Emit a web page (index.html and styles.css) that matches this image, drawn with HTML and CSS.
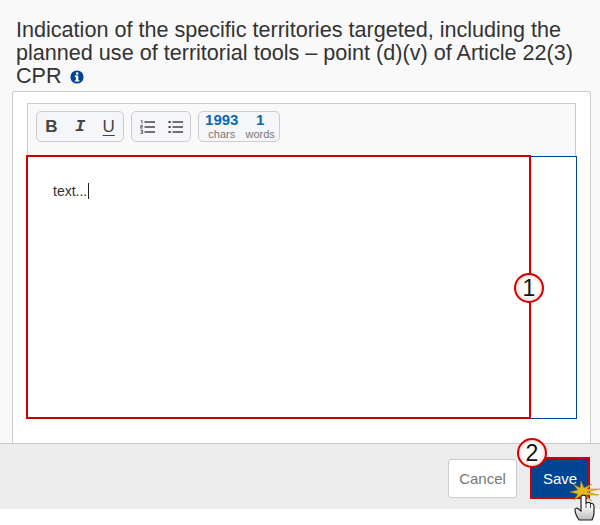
FILE: index.html
```html
<!DOCTYPE html>
<html lang="en">
<head>
    <meta charset="UTF-8">
    <title>Edit text</title>
    <link rel="stylesheet" href="styles.css">
</head>
<body>
    <div class="dialog">
        <h4 class="dialog-title">Indication of the specific territories targeted, including the planned use of territorial tools – point (d)(v) of Article 22(3) CPR
            <svg class="info-icon" viewBox="0 0 14 14" width="14" height="14">
                <circle cx="7" cy="7" r="6.6" fill="#004494"/>
                <rect x="5.9" y="2.4" width="2.4" height="2.2" fill="#fff"/>
                <path d="M4.8 5.6h3.5v4.6h1.1v1.4H4.8v-1.4h1.1V7H4.8z" fill="#fff"/>
            </svg>
        </h4>
        <div class="panel">
            <div class="editor">
                <div class="toolbar">
                    <div class="btn-group">
                        <span class="tool tool-b">B</span>
                        <span class="tool tool-i">I</span>
                        <span class="tool tool-u">U</span>
                    </div>
                    <div class="btn-group">
                        <svg class="list-icon" viewBox="0 0 15 14" width="15" height="14">
                            <path d="M4.500 2h10.500M4.500 7h10.500M4.500 12h10.500" stroke="#444" stroke-width="1.600"/>
                            <path d="M.8 .6h1.300v3M.3 5.600h2.200v1.200H.5v1.300h2.200M.4 10.200h2.200v3.200H.4M1.100 11.800h1.400" stroke="#444" stroke-width=".8" fill="none"/>
                        </svg>
                        <svg class="list-icon" viewBox="0 0 15 14" width="15" height="14">
                            <path d="M4.500 2h10.500M4.500 7h10.500M4.500 12h10.500" stroke="#444" stroke-width="1.600"/>
                            <path d="M.5 2h2.200M.5 7h2.200M.5 12h2.200" stroke="#444" stroke-width="1.800"/>
                        </svg>
                    </div>
                    <div class="btn-group counters">
                        <div class="counter"><b>1993</b><span>chars</span></div>
                        <div class="counter"><b>1</b><span>words</span></div>
                    </div>
                </div>
                <div class="editor-area">
                    <p class="editor-text">text...<span class="caret"></span></p>
                    <div class="highlight">
                        <span class="step step-1">1</span>
                    </div>
                </div>
            </div>
        </div>
        <div class="dialog-footer">
            <button type="button" class="btn btn-cancel">Cancel</button>
            <div class="save-wrap">
                <button type="button" class="btn btn-save">Save</button>
                <span class="step step-2">2</span>
                <svg class="click-icon" viewBox="0 0 30 40" width="30" height="40">
                    <defs>
                        <linearGradient id="handFill" x1="0" y1="0" x2="0" y2="1">
                            <stop offset="0.4" stop-color="#fff"/>
                            <stop offset="1" stop-color="#bbb"/>
                        </linearGradient>
                    </defs>
                    <path d="M11 0 L14 7 L22 3 L17 8 L30 8 L17 11 L29 14 L16 14 L22 20 L13 15 L12 21 L10 15 L4 19 L8 13 L0 11 L8 9 L3 3 L10 7 Z" fill="#e6b71e" stroke="#b08a16" stroke-width=".5"/>
                    <path d="M9 39 C7 36 5 33 5 29 C5 27 7 26.500 9 28.500 L11 30 V16 C11 13.500 16 13.500 16 16 V22 C18 21 20 21 20.500 22.500 C22 22 24 23 24 25 V32 C24 35 23 37 22 39 Z" fill="url(#handFill)" stroke="#222" stroke-width="1.200"/>
                    <path d="M16 22 V27 M20.500 22.500 V27" stroke="#222" stroke-width=".8"/>
                </svg>
            </div>
        </div>
    </div>
</body>
</html>
```

FILE: styles.css
```css
* {
    box-sizing: border-box;
    margin: 0;
    padding: 0;
}

body {
    min-height: 525px;
    background-color: #fff;
    font-family: 'Liberation Sans', Arial, sans-serif;
    color: #333;
}

.dialog {
    height: 509px;
    background-color: #f9f9f9;
    display: flex;
    flex-direction: column;
}

.dialog-title {
    padding: 18px 16px 0;
    height: 91px;
    font-size: 21.6px;
    font-weight: normal;
    line-height: 23px;
}

.info-icon {
    margin-left: 2px;
    vertical-align: -1px;
}

.panel {
    flex: 1;
    margin: 0 9px 0 12px;
    padding: 11px 14px 0;
    background-color: #fff;
    border: 1px solid #ccc;
    border-bottom: none;
    border-radius: 3px 3px 0 0;
}

.editor {
    display: flex;
    flex-direction: column;
}

.toolbar {
    height: 53px;
    padding: 7px 8px;
    display: flex;
    align-items: flex-start;
    gap: 7px;
    background-color: #f9f9f9;
    border: 1px solid #ccc;
    border-bottom: none;
}

.btn-group {
    height: 31px;
    display: flex;
    align-items: center;
    background-color: #f5f6fa;
    border: 1px solid #ccc;
    border-radius: 5px;
}

.tool {
    width: 28.700px;
    text-align: center;
    font-size: 17px;
    color: #444;
}

.tool-b {
    font-weight: bold;
}

.tool-i {
    font-family: 'Liberation Mono', monospace;
    font-style: italic;
    font-weight: bold;
    font-size: 17px;
}

.tool-u {
    text-decoration: underline;
    text-underline-offset: 3px;
}

.list-icon {
    margin-left: 8px;
}

.list-icon + .list-icon {
    margin: 0 7px 0 13px;
}

.counters {
    padding: 0 4px 0 6px;
    gap: 7px;
}

.counter {
    display: flex;
    flex-direction: column;
    align-items: center;
}

.counter b {
    font-size: 15px;
    line-height: 14px;
    color: #0a68b0;
}

.counter span {
    font-size: 11px;
    line-height: 14px;
    color: #777;
}

.editor-area {
    position: relative;
    height: 263px;
    margin: 0 -1px;
    padding: 24px 26px;
    background-color: #fff;
    border: 1px solid #004494;
}

.editor-text {
    font-size: 14px;
    line-height: 20px;
}

.caret {
    display: inline-block;
    width: 1px;
    height: 16px;
    margin-left: 1px;
    vertical-align: -3px;
    background-color: #222;
}

.highlight {
    position: absolute;
    left: -1px;
    top: -2px;
    width: 505px;
    height: 264px;
    border: 2px solid #c00;
}

.step {
    position: absolute;
    z-index: 1;
    width: 30px;
    height: 30px;
    font-family: 'Liberation Sans', Arial, sans-serif;
    font-size: 23px;
    line-height: 26px;
    text-align: center;
    color: #111;
    background: radial-gradient(circle, #fff 50%, #f6b0b0 92%);
    border: 2px solid #d40000;
    border-radius: 50%;
}

.step-1 {
    right: -15px;
    top: 116px;
}

.step-2 {
    left: -13px;
    top: -19px;
}

.dialog-footer {
    height: 66px;
    padding: 15px 10px 0 0;
    display: flex;
    justify-content: flex-end;
    align-items: flex-start;
    gap: 13px;
    background-color: #ececec;
    border-top: 1px solid #ccc;
}

.btn {
    height: 39px;
    font-family: inherit;
    font-size: 15px;
}

.btn-cancel {
    width: 69px;
    color: #777;
    background-color: #fff;
    border: 1px solid #ccc;
    border-radius: 3px;
}

.save-wrap {
    position: relative;
    height: 42px;
    margin-top: -2px;
}

.btn-save {
    display: block;
    width: 60px;
    height: 42px;
    color: #fff;
    background-color: #004494;
    border: 2px solid #c00;
}

.click-icon {
    position: absolute;
    left: 40px;
    top: 24px;
}
```
